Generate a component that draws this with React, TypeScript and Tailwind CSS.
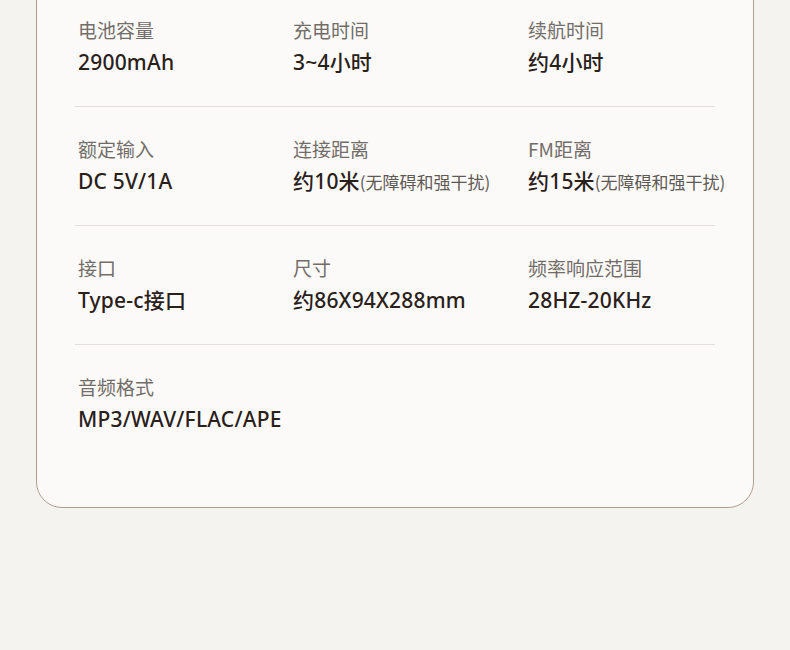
import React from 'react';

type Spec = { label: string; value: string; note?: string };

const rows: Spec[][] = [
  [
    { label: '电池容量', value: '2900mAh' },
    { label: '充电时间', value: '3~4小时' },
    { label: '续航时间', value: '约4小时' },
  ],
  [
    { label: '额定输入', value: 'DC 5V/1A' },
    { label: '连接距离', value: '约10米', note: '(无障碍和强干扰)' },
    { label: 'FM距离', value: '约15米', note: '(无障碍和强干扰)' },
  ],
  [
    { label: '接口', value: 'Type-c接口' },
    { label: '尺寸', value: '约86X94X288mm' },
    { label: '频率响应范围', value: '28HZ-20KHz' },
  ],
  [{ label: '音频格式', value: 'MP3/WAV/FLAC/APE' }],
];

const cjk = '"Noto Sans CJK SC", "Noto Sans", sans-serif';
const latinFirst = '"Noto Sans", "Noto Sans CJK SC", sans-serif';

const SpecCell = ({ spec }: { spec: Spec }) => (
  <div className="flex flex-col gap-[6px]">
    <div className="h-[24px] text-[19px] leading-[24px] text-[#736d69]">{spec.label}</div>
    <div className="h-[28px] flex items-baseline text-[21px] leading-[28px] text-[#2a201a] whitespace-nowrap">
      <span className="font-medium tracking-[0.2px]" style={{ fontFamily: latinFirst }}>
        {spec.value}
      </span>
      {spec.note && <span className="text-[17px] leading-[28px] text-[#5f5955]">{spec.note}</span>}
    </div>
  </div>
);

const App = () => {
  return (
    <div className="w-[790px] h-[650px] overflow-hidden bg-[#f5f3ef]" style={{ fontFamily: cjk }}>
      <div className="mx-[36px] -mt-[40px] pt-[27px] pb-[74px] bg-[#fbfaf8] border-[1.5px] border-[#b49d8e] rounded-b-[26px]">
        {rows.map((row, i) => (
          <div key={i}>
            <div
              className={`grid grid-cols-[215px_235px_1fr] pl-[41px] pt-[30px] ${i === rows.length - 1 ? '' : 'pb-[30px]'}`}
            >
              {row.map((spec) => (
                <SpecCell key={spec.label} spec={spec} />
              ))}
            </div>
            {i < rows.length - 1 && <div className="mx-[38px] h-px bg-[#e2ded9]" />}
          </div>
        ))}
      </div>
    </div>
  );
};

export default App;
